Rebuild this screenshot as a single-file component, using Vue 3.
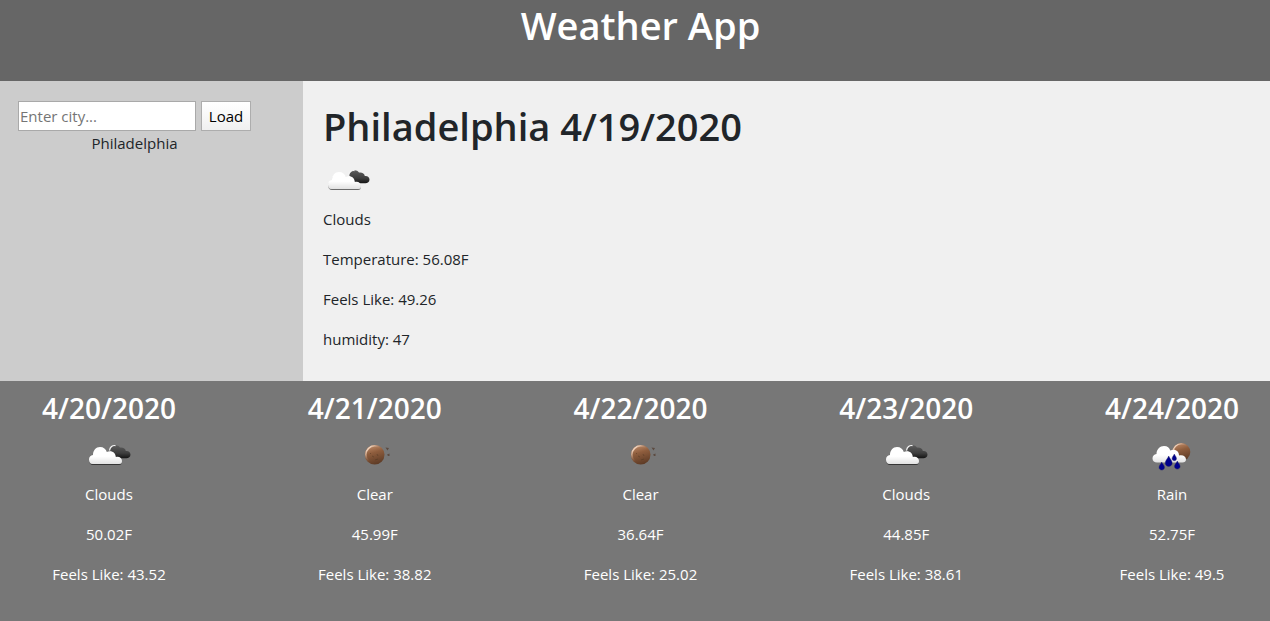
<script setup>
import { ref } from 'vue'

const city = ref('')
const searches = ['Philadelphia']
const today = {
  place: 'Philadelphia',
  date: '4/19/2020',
  sky: 'Clouds',
  temp: '56.08F',
  feels: '49.26',
  humidity: '47',
}
const days = [
  { date: '4/20/2020', sky: 'Clouds', temp: '50.02F', feels: '43.52' },
  { date: '4/21/2020', sky: 'Clear', temp: '45.99F', feels: '38.82' },
  { date: '4/22/2020', sky: 'Clear', temp: '36.64F', feels: '25.02' },
  { date: '4/23/2020', sky: 'Clouds', temp: '44.85F', feels: '38.61' },
  { date: '4/24/2020', sky: 'Rain', temp: '52.75F', feels: '49.5' },
]
</script>

<template>
  <div class="app">
    <svg class="defs" aria-hidden="true">
      <defs>
        <linearGradient id="white-cloud" x1="0" y1="0" x2="0" y2="1">
          <stop offset="0.55" stop-color="#ffffff" />
          <stop offset="1" stop-color="#e2e2e2" />
        </linearGradient>
        <linearGradient id="dark-cloud" x1="0" y1="0" x2="0" y2="1">
          <stop offset="0" stop-color="#5c5c5c" />
          <stop offset="0.6" stop-color="#3e3e3e" />
          <stop offset="1" stop-color="#141414" />
        </linearGradient>
        <linearGradient id="moon" x1="0.3" y1="0" x2="0.6" y2="1">
          <stop offset="0" stop-color="#c08c69" />
          <stop offset="0.4" stop-color="#8e5d3d" />
          <stop offset="1" stop-color="#5c3a25" />
        </linearGradient>
        <linearGradient id="moon-rim" x1="0" y1="0" x2="1" y2="1">
          <stop offset="0.15" stop-color="#f0d3bd" />
          <stop offset="0.55" stop-color="#8a583a" stop-opacity="0" />
        </linearGradient>
        <filter id="cloud-shadow" x="-20%" y="-20%" width="140%" height="150%">
          <feDropShadow dx="0" dy="1" stdDeviation="0.6" flood-color="#000" flood-opacity="0.55" />
        </filter>
        <g id="icon-Clouds">
          <path fill="url(#dark-cloud)" d="M26 20C27 15.500 33 13.500 36 17.500C39 17 41.500 18.500 41.800 21C44.500 20.500 46.500 22.500 46.500 24.500C46.500 27 44.500 28.300 42.500 28.300H32Z" />
          <path fill="none" stroke="#f4f4f4" stroke-width="1.200" d="M25.500 20.500C26 17 28.500 15 31.500 15.600" />
          <path filter="url(#cloud-shadow)" fill="url(#white-cloud)" d="M9 34C6.500 34 5 32 5 29.500C5 27 6.500 25.500 9 25C9 20.500 12 17 16 17C19.500 17 22 19 22.800 22C27 20 31.500 22 31.800 27C35 26 38 27.800 38 31C38 33 37 34 35 34Z" />
        </g>
        <g id="icon-Clear">
          <circle cx="24.700" cy="24.700" r="9.800" fill="url(#moon)" />
          <circle cx="24.700" cy="24.700" r="8.800" fill="none" stroke="url(#moon-rim)" stroke-width="1.700" />
          <path d="M22 26l2 1M27 24l1 2M25 30l3-1M20 23l1 1" stroke="#49331f" stroke-width="0.700" opacity="0.600" />
          <path fill="#5c4b41" d="M35.500 17.500L39 18L37.500 20.500ZM37 24.500L39.500 23.500L39.500 26L38 26Z" />
        </g>
        <g id="icon-Rain">
          <circle cx="34.300" cy="22" r="9" fill="url(#moon)" />
          <circle cx="34.300" cy="22" r="8.200" fill="none" stroke="url(#moon-rim)" stroke-width="1.300" />
          <path fill="url(#white-cloud)" d="M10 32.500C7.500 32.500 5.500 31 5.500 28.500C5.500 26 7 24.500 9.500 24C9.500 19.500 13 16 17 16C20.500 16 22.500 18 23.300 20.500C28 18.500 32 21 32 25.500C36 24.500 39 26.500 39 29.500C39 31.500 37.500 32.500 35.500 32.500Z" />
          <g fill="#00008c" stroke="#20206a" stroke-width="0.400">
            <path d="M14.700 32C15.500 34 17.500 35.500 17.500 37.300C17.500 41 12 41 12 37.300C12 35.500 14 34 14.700 32Z" />
            <path d="M21.700 26C22.600 28.500 25.200 30.500 25.200 33C25.200 37.500 18.200 37.500 18.200 33C18.200 30.500 20.800 28.500 21.700 26Z" />
            <path d="M27.300 24C27.900 25.500 29.500 27 29.500 28.500C29.500 31.500 25.100 31.500 25.100 28.500C25.100 27 26.700 25.500 27.300 24Z" />
            <path d="M30.300 31C31.100 33 33.100 34.500 33.100 36.300C33.100 40 27.500 40 27.500 36.300C27.500 34.500 29.500 33 30.300 31Z" />
          </g>
        </g>
      </defs>
    </svg>

    <header class="top">
      <h1>Weather App</h1>
    </header>

    <main class="middle">
      <aside class="search">
        <form class="search-form" @submit.prevent>
          <input v-model="city" type="text" placeholder="Enter city..." aria-label="City" />
          <button type="submit">Load</button>
        </form>
        <div v-for="name in searches" :key="name" class="history">{{ name }}</div>
      </aside>
      <section class="today">
        <h1>{{ today.place }} {{ today.date }}</h1>
        <svg class="icon" viewBox="0 0 50 50" role="img" :aria-label="today.sky">
          <use :href="'#icon-' + today.sky" />
        </svg>
        <p>{{ today.sky }}</p>
        <p>Temperature: {{ today.temp }}</p>
        <p>Feels Like: {{ today.feels }}</p>
        <p>humidity: {{ today.humidity }}</p>
      </section>
    </main>

    <section class="forecast">
      <article v-for="day in days" :key="day.date" class="day">
        <h3>{{ day.date }}</h3>
        <svg class="icon" viewBox="0 0 50 50" role="img" :aria-label="day.sky">
          <use :href="'#icon-' + day.sky" />
        </svg>
        <p>{{ day.sky }}</p>
        <p>{{ day.temp }}</p>
        <p>Feels Like: {{ day.feels }}</p>
      </article>
    </section>
  </div>
</template>

<style>
body {
  margin: 0;
  background: #777777;
}
</style>

<style scoped>
.app {
  display: flex;
  flex-direction: column;
  min-height: 100vh;
  background: #777777;
  color: #212529;
  font-family: "Segoe UI", "Open Sans", "Noto Sans", sans-serif;
  font-size: 15px;
  line-height: 24px;
}
.defs {
  position: absolute;
  width: 0;
  height: 0;
}
h1,
h3,
p {
  margin: 0;
}
h1 {
  font-size: 38px;
  font-weight: 600;
  line-height: 48px;
}
p {
  margin-bottom: 16px;
}
.icon {
  display: block;
  width: 50px;
  height: 50px;
}
.top {
  padding: 1px 0 32px 11px;
  background: #666666;
  color: #ffffff;
  text-align: center;
}
.middle {
  display: flex;
  min-height: 300px;
  background: #f0f0f0;
}
.search {
  box-sizing: border-box;
  width: 303px;
  padding: 20px 18px;
  background: #cccccc;
}
.search-form {
  display: flex;
  gap: 5px;
}
.search-form input {
  box-sizing: border-box;
  width: 178px;
  height: 30px;
  padding: 1px;
  border: 1px solid #a9a9a9;
  border-radius: 0;
  background: #ffffff;
  color: #212529;
  font: inherit;
}
.search-form input::placeholder {
  color: #757575;
  opacity: 1;
}
.search-form button {
  box-sizing: border-box;
  width: 50px;
  height: 30px;
  padding: 0;
  border: 1px solid #adadad;
  border-radius: 0;
  background: linear-gradient(#ffffff, #f0f0f0);
  color: #000000;
  font: inherit;
}
.history {
  width: 233px;
  text-align: center;
}
.today {
  flex: 1;
  padding: 21px 20px 0;
}
.today .icon {
  margin: 5px 0 2px;
}
.forecast {
  display: flex;
  flex: 1;
  justify-content: space-between;
  padding: 9px 30px 20px 41px;
  color: #ffffff;
}
.day {
  display: flex;
  flex-direction: column;
  align-items: center;
  width: 136px;
  text-align: center;
}
.day h3 {
  font-size: 28px;
  font-weight: 600;
  line-height: 36px;
}
.day .icon {
  margin: 4px 0 2px;
}
</style>
